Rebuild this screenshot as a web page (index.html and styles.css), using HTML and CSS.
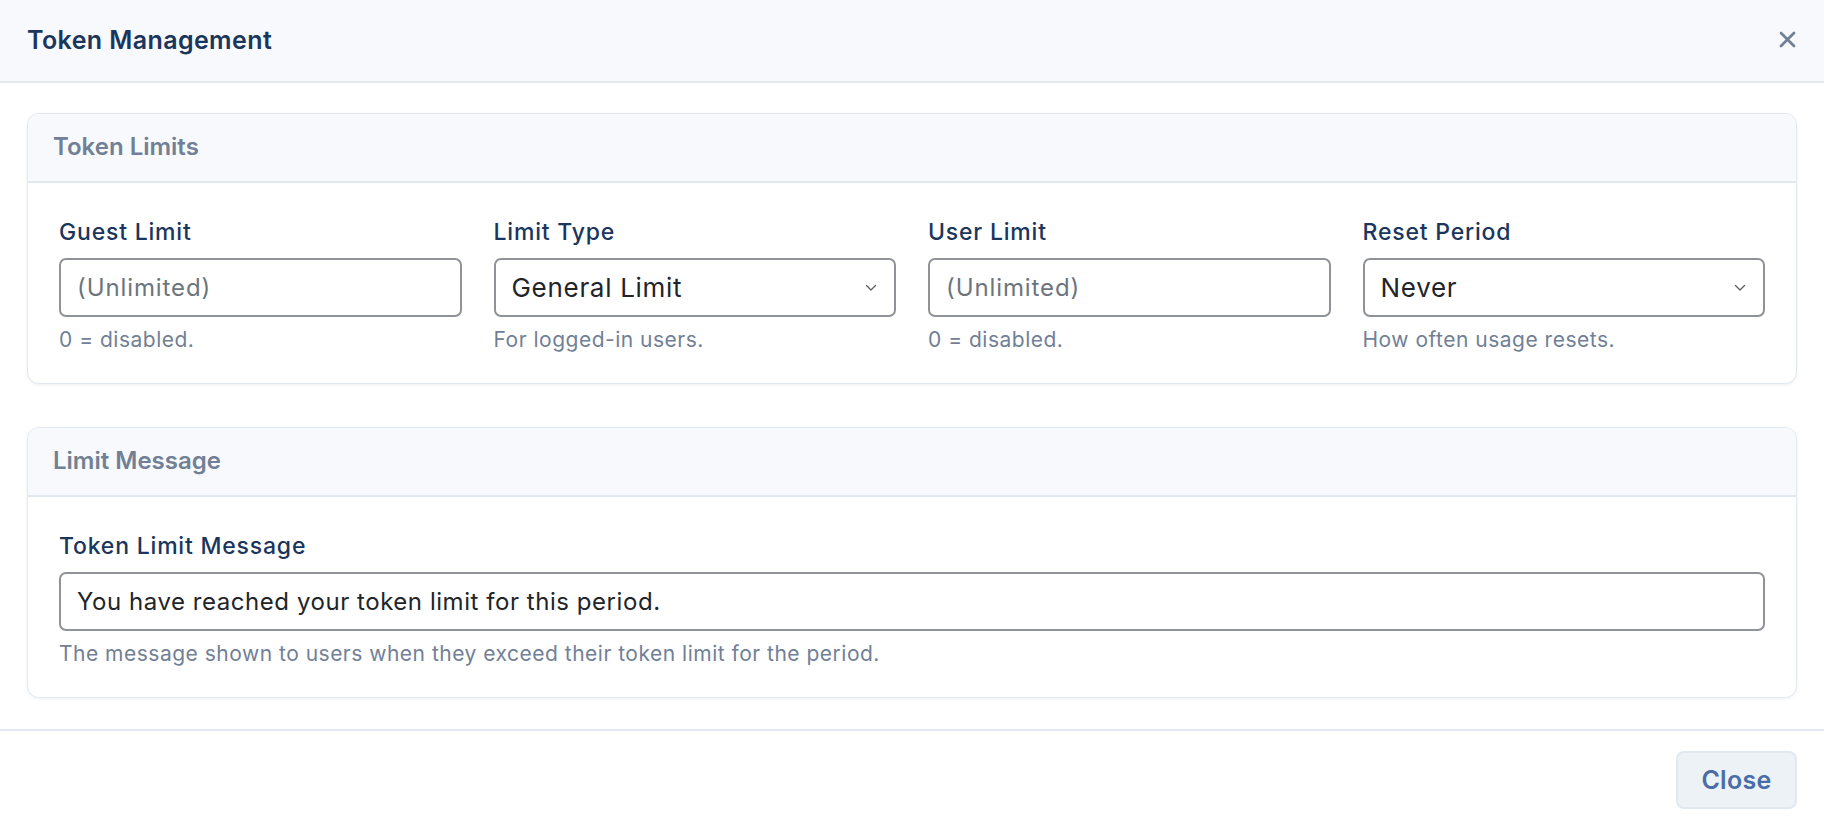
FILE: index.html
```html
<!DOCTYPE html>
<html lang="en">
<head>
<meta charset="utf-8">
<title>Token Management</title>
<link rel="stylesheet" href="styles.css">
</head>
<body>
<div class="modal">
  <header class="modal-header">
    <h1 class="modal-title">Token Management</h1>
    <button class="icon-close" aria-label="Close">
      <svg width="17" height="17" viewBox="0 0 17 17"><path d="M2 2 L15 15 M15 2 L2 15" stroke="#718096" stroke-width="2.8" stroke-linecap="round" fill="none"/></svg>
    </button>
  </header>

  <main class="modal-body">
    <section class="card card-first">
      <div class="card-header">Token Limits</div>
      <div class="card-body grid4">
        <div class="field">
          <label class="label">Guest Limit</label>
          <input class="control" type="text" placeholder="(Unlimited)">
          <div class="help">0 = disabled.</div>
        </div>
        <div class="field">
          <label class="label">Limit Type</label>
          <div class="select-wrap">
            <div class="control select">General Limit</div>
            <svg class="chevron" width="12" height="8" viewBox="0 0 12 8"><path d="M1.5 1.5 L6 6 L10.5 1.5" stroke="#5f6368" stroke-width="1.4" fill="none" stroke-linecap="round" stroke-linejoin="round"/></svg>
          </div>
          <div class="help">For logged-in users.</div>
        </div>
        <div class="field">
          <label class="label">User Limit</label>
          <input class="control" type="text" placeholder="(Unlimited)">
          <div class="help">0 = disabled.</div>
        </div>
        <div class="field">
          <label class="label">Reset Period</label>
          <div class="select-wrap">
            <div class="control select">Never</div>
            <svg class="chevron" width="12" height="8" viewBox="0 0 12 8"><path d="M1.5 1.5 L6 6 L10.5 1.5" stroke="#5f6368" stroke-width="1.4" fill="none" stroke-linecap="round" stroke-linejoin="round"/></svg>
          </div>
          <div class="help">How often usage resets.</div>
        </div>
      </div>
    </section>

    <section class="card">
      <div class="card-header">Limit Message</div>
      <div class="card-body">
        <div class="field">
          <label class="label">Token Limit Message</label>
          <input class="control" type="text" value="You have reached your token limit for this period.">
          <div class="help">The message shown to users when they exceed their token limit for the period.</div>
        </div>
      </div>
    </section>
  </main>

  <footer class="modal-footer">
    <button class="btn-close">Close</button>
  </footer>
</div>
</body>
</html>
```

FILE: styles.css
```css
* { box-sizing: border-box; }
html, body { margin: 0; padding: 0; background: #ffffff; }
body {
  font-family: Inter, "Noto Sans", "Liberation Sans", sans-serif;
  color: #212529;
}

.modal { width: 1824px; height: 830px; display: flex; flex-direction: column; }

.modal-header {
  height: 83px;
  flex: none;
  background: #f7f9fc;
  border-bottom: 2px solid #e2e8f0;
  display: flex;
  align-items: center;
  justify-content: space-between;
  padding: 0 28px 2px 27px;
}
.modal-title {
  margin: 0;
  font-size: 25px;
  font-weight: 600;
  color: #1a365d;
  letter-spacing: 0.4px;
}
.icon-close {
  border: 0;
  background: transparent;
  padding: 0;
  width: 17px;
  height: 17px;
  display: flex;
}

.modal-body {
  padding: 30px 27px 0 27px;
}

.card {
  border: 1px solid #e2e8f0;
  border-radius: 12px;
  background: #fff;
  box-shadow: 0 1px 3px rgba(30, 50, 90, 0.08);
  overflow: hidden;
}
.card-first { margin-bottom: 43px; }

.card-header {
  height: 69px;
  background: #f7f9fc;
  border-bottom: 2px solid #e2e8f0;
  padding: 0 25px 2px;
  display: flex;
  align-items: center;
  font-size: 24px;
  font-weight: 600;
  color: #718096;
}

.card-body {
  padding: 33px 31px 29px 31px;
}
.grid4 {
  display: grid;
  grid-template-columns: repeat(4, 1fr);
  column-gap: 32px;
}

.field { display: flex; flex-direction: column; }

.label {
  font-size: 23px;
  line-height: 33px;
  font-weight: 500;
  letter-spacing: 0.8px;
  color: #1a365d;
  margin-bottom: 9px;
}

.control {
  height: 59px;
  width: 100%;
  border: 2px solid #8f9297;
  border-radius: 7px;
  padding: 0 16px;
  font-family: inherit;
  font-size: 24px;
  letter-spacing: 0.55px;
  color: #212529;
  background: #fff;
  outline: none;
}
.control::placeholder { color: #6c757d; opacity: 1; letter-spacing: 0.9px; }

.select-wrap { position: relative; }
.select { display: flex; align-items: center; font-size: 26px; letter-spacing: 0.7px; }
.chevron { position: absolute; right: 19px; top: 26px; }

.help {
  margin-top: 9px;
  font-size: 21px;
  line-height: 28px;
  letter-spacing: 0.5px;
  color: #718096;
}

.modal-footer {
  border-top: 2px solid #e2e8f0;
  margin-top: 31px;
  padding: 20px 27px 0 0;
  display: flex;
  justify-content: flex-end;
}
.btn-close {
  width: 121px;
  height: 58px;
  background: #edf2f7;
  border: 2px solid #e2e8f0;
  border-radius: 8px;
  font-family: inherit;
  font-size: 25px;
  font-weight: 600;
  letter-spacing: 0.3px;
  color: #4a6da7;
  padding: 0;
}
```
